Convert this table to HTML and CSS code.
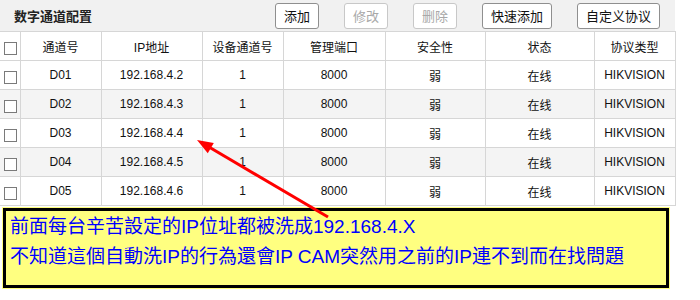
FILE: index.html
```html
<!DOCTYPE html>
<html lang="zh">
<head>
  <meta charset="UTF-8">
  <title>数字通道配置</title>
  <link rel="stylesheet" href="styles.css">
</head>
<body>
  <div class="panel">
    <div class="toolbar">
      <span class="title">数字通道配置</span>
      <div class="actions">
        <button>添加</button>
        <button disabled>修改</button>
        <button disabled>删除</button>
        <button>快速添加</button>
        <button>自定义协议</button>
      </div>
    </div>
    <table class="channels">
      <colgroup>
        <col style="width: 20px">
        <col style="width: 81px">
        <col style="width: 101px">
        <col style="width: 81px">
        <col style="width: 102px">
        <col style="width: 100px">
        <col style="width: 109px">
        <col style="width: 81px">
      </colgroup>
      <thead>
        <tr>
          <th class="chk"><input type="checkbox"></th>
          <th>通道号</th>
          <th>IP地址</th>
          <th>设备通道号</th>
          <th>管理端口</th>
          <th>安全性</th>
          <th>状态</th>
          <th>协议类型</th>
        </tr>
      </thead>
      <tbody id="rows"></tbody>
    </table>
  </div>

  <div class="note">
    <p>前面每台辛苦設定的IP位址都被洗成192.168.4.X</p>
    <p>不知道這個自動洗IP的行為還會IP CAM突然用之前的IP連不到而在找問題</p>
  </div>

  <svg class="arrow" width="700" height="300" viewBox="0 0 700 300">
    <line x1="328" y1="217" x2="209" y2="147" stroke="#ff0000" stroke-width="3"/>
    <polygon points="197,140 207.8,153.3 213.8,142.9" fill="#ff0000"/>
  </svg>

  <script>
    const channels = [
      { id: 'D01', ip: '192.168.4.2' },
      { id: 'D02', ip: '192.168.4.3' },
      { id: 'D03', ip: '192.168.4.4' },
      { id: 'D04', ip: '192.168.4.5' },
      { id: 'D05', ip: '192.168.4.6' }
    ];

    const tbody = document.getElementById('rows');
    channels.forEach(ch => {
      const tr = document.createElement('tr');
      tr.innerHTML = `<td class="chk"><input type="checkbox"></td>
        <td>${ch.id}</td><td>${ch.ip}</td><td>1</td><td>8000</td>
        <td>弱</td><td>在线</td><td>HIKVISION</td>`;
      tbody.appendChild(tr);
    });
  </script>
</body>
</html>
```

FILE: styles.css
```css
body {
  margin: 0;
  background: #fff;
  color: #111;
  font-family: 'Liberation Sans', 'Noto Sans CJK SC', sans-serif;
  font-size: 12px;
  position: relative;
  width: 700px;
  height: 300px;
  overflow: hidden;
}
.panel {
  width: 675px;
}
.toolbar {
  display: flex;
  align-items: center;
  height: 31px;
  background: #f1f1f1;
  padding: 0 15px 0 14px;
}
.title {
  font-size: 13px;
  font-weight: bold;
  color: #222;
}
.actions {
  margin-left: auto;
  display: flex;
  gap: 25px;
}
.actions button {
  height: 26px;
  padding: 0 8px;
  font-family: 'Liberation Sans', 'Noto Sans CJK SC', sans-serif;
  font-size: 13px;
  color: #111;
  background: #fff;
  border: 1px solid #8f8f8f;
  border-radius: 3px;
}
.actions button:disabled {
  color: #a8a8a8;
  border-color: #c8c8c8;
}
.channels {
  width: 675px;
  table-layout: fixed;
  border-collapse: collapse;
}
.channels th,
.channels td {
  height: 28px;
  padding: 0;
  border: 1px solid #d6d6d6;
  text-align: center;
  font-weight: normal;
  white-space: nowrap;
}
.channels th:first-child,
.channels td:first-child {
  border-left: none;
}
.channels tbody tr:nth-child(even) td {
  background: #f4f4f4;
}
.channels input {
  appearance: none;
  width: 13px;
  height: 13px;
  margin: 5px 0 0 0;
  background: #fff;
  border: 1px solid #7a7a7a;
  vertical-align: middle;
}
.chk {
  text-align: left !important;
  padding-left: 4px !important;
}
.note {
  position: absolute;
  left: 3px;
  top: 208px;
  width: 666px;
  height: 80px;
  box-sizing: border-box;
  border: 3px solid #000;
  box-shadow: 0 0 0 1px #ffff80;
  background: #ffff80;
  padding: 1px 4px;
  color: #0000ff;
  font-family: 'Liberation Sans', 'Noto Sans CJK TC', sans-serif;
  font-size: 19px;
  line-height: 30px;
}
.note p {
  margin: 0;
  white-space: nowrap;
}
.arrow {
  position: absolute;
  left: 0;
  top: 0;
}
```
